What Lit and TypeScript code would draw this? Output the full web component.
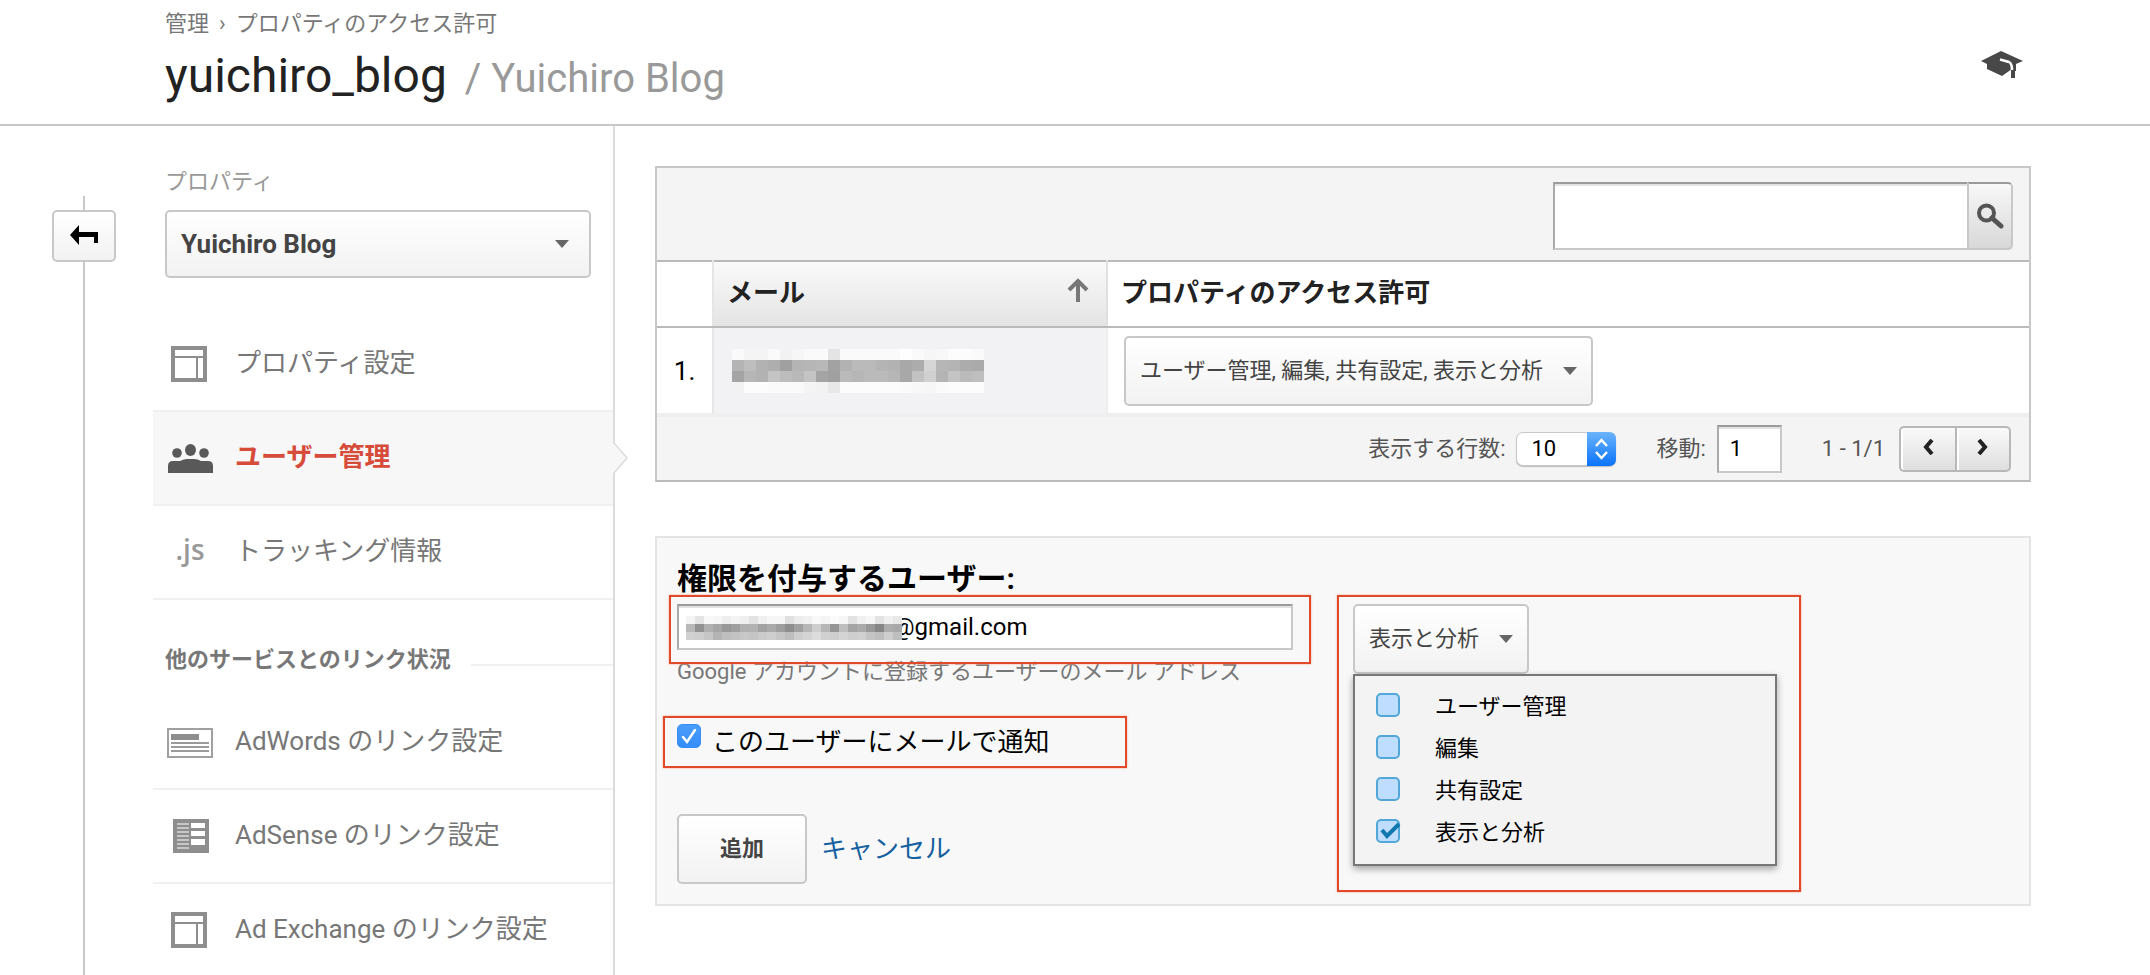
import { LitElement, html, css, svg } from "lit";
import { customElement, state } from "lit/decorators.js";

type NavItem = { label: string; icon: string; active?: boolean };

const PROPERTY_NAV: NavItem[] = [
  { label: "プロパティ設定", icon: "layout" },
  { label: "ユーザー管理", icon: "people", active: true },
  { label: "トラッキング情報", icon: "js" },
];

const LINK_NAV: NavItem[] = [
  { label: "AdWords のリンク設定", icon: "adwords" },
  { label: "AdSense のリンク設定", icon: "adsense" },
  { label: "Ad Exchange のリンク設定", icon: "layout" },
];

const PERMISSIONS = ["ユーザー管理", "編集", "共有設定", "表示と分析"];

/* Grey levels of the masked part of each address, one list per pixel row. */
const MASK_ROW = [
  [250, 244, 244, 250, 242, 246, 250, 250, 228, 250, 250, 250, 250, 250, 254, 250, 246, 248, 252, 252, 250],
  [180, 190, 178, 174, 160, 180, 182, 184, 162, 178, 186, 186, 180, 178, 168, 172, 214, 182, 180, 172, 170],
  [164, 182, 178, 196, 188, 184, 196, 164, 160, 186, 182, 186, 186, 182, 168, 194, 208, 180, 196, 186, 190],
  [242, 252, 252, 250, 250, 250, 244, 242, 232, 252, 252, 252, 252, 252, 250, 248, 246, 250, 252, 252, 252],
];
const MASK_EMAIL = [
  [244, 228, 248, 246, 238, 244, 238, 226, 240, 246, 246, 224, 236, 240, 248, 244, 250, 246, 226, 240, 246, 226, 240, 232],
  [184, 146, 176, 166, 152, 160, 176, 178, 162, 170, 158, 142, 160, 182, 206, 182, 150, 190, 164, 170, 152, 134, 172, 168],
  [208, 206, 198, 180, 190, 194, 200, 196, 202, 206, 198, 190, 206, 212, 220, 208, 206, 212, 206, 208, 196, 190, 206, 190],
];

const mosaic = (rows: number[][], cellW: number, cellH: number) => html`
  <svg width=${rows[0].length * cellW} height=${rows.length * cellH} shape-rendering="crispEdges" aria-hidden="true">
    ${rows.map((row, y) =>
      row.map((v, x) => svg`<rect x=${x * cellW} y=${y * cellH} width=${cellW} height=${cellH} fill=${`rgb(${v},${v},${v + 1})`} />`)
    )}
  </svg>`;

const ICONS: Record<string, unknown> = {
  layout: html`<svg width="48" height="40" viewBox="0 0 48 40">
    <path fill="#8e8e8e" fill-rule="evenodd" d="M5 3h36v36H5zM9 7v6h28V7zM9 15v20h21V15zM32 15v20h5V15z" />
  </svg>`,
  people: html`<svg width="48" height="40" viewBox="0 0 48 40" fill="#595959">
    <ellipse cx="24.500" cy="13" rx="5.500" ry="6" /><circle cx="11" cy="16" r="4.800" /><circle cx="38" cy="16" r="4.800" />
    <path d="M2 36v-7q0-5 5-5h7q4-2 7-2h7q4 0 7 2h7q5 0 5 5v7z" />
  </svg>`,
  js: html`<span class="js">.js</span>`,
  adwords: html`<svg width="48" height="40" viewBox="0 0 48 40">
    <rect x="2" y="8" width="44" height="28" fill="#fff" stroke="#a0a0a0" stroke-width="2" />
    <rect x="5" y="13" width="28" height="6" fill="#8e8e8e" />
    <path stroke="#9a9a9a" stroke-width="2" d="M5 22h38M5 26h38M5 30h38" />
  </svg>`,
  adsense: html`<svg width="48" height="40" viewBox="0 0 48 40">
    <rect x="7" y="4" width="36" height="34" fill="#8e8e8e" />
    <path stroke="#c6c6c6" stroke-width="2" d="M11 9h12M11 13h12M11 17h12M11 21h12M11 25h12M11 29h12M11 33h12" />
    <path fill="#fff" d="M25 8h14v5H25zM25 16h14v5H25zM25 24h14v6H25z" />
  </svg>`,
};

const caret = html`<svg class="caret" width="14" height="8" viewBox="0 0 14 8" aria-hidden="true">
  <path d="M0 0h14L7 8z" fill="#666" />
</svg>`;

@customElement("app-root")
export class AppRoot extends LitElement {
  @state() private granted = new Set<string>(["表示と分析"]);

  static styles = css`
    :host {
      display: flex;
      flex-direction: column;
      min-height: 100vh;
      background: #fff;
      color: #222;
      font-family: Roboto, "Noto Sans CJK JP", sans-serif;
      font-size: 22px;
      line-height: 32px;
    }
    *, *::before, *::after { box-sizing: border-box; }
    svg { display: block; flex: none; }
    a { color: inherit; text-decoration: none; }
    button, input, select { font: inherit; margin: 0; }
    h1, h2, ul, p, fieldset { margin: 0; padding: 0; border: 0; list-style: none; }

    .top {
      display: flex;
      justify-content: space-between;
      align-items: center;
      height: 126px;
      padding: 6px 127px 0 165px;
      border-bottom: 2px solid #c8c8c8;
    }
    .crumbs { display: flex; gap: 10px; color: #777; }
    .title { display: flex; align-items: baseline; gap: 18px; height: 82px; font-size: 48px; line-height: 72px; font-weight: 400; }
    .title .sub { font-size: 40px; color: #999; }

    .page { flex: 1; display: grid; grid-template-columns: 153px 462px minmax(0, 1fr); }
    .rail { display: flex; flex-direction: column; align-items: center; width: 64px; margin-left: 52px; padding-top: 70px; }
    .rail::before { content: ""; width: 2px; height: 14px; background: #c8c8c8; }
    .rail::after { content: ""; width: 2px; flex: 1; background: #c8c8c8; }

    .btn {
      display: inline-flex;
      align-items: center;
      justify-content: center;
      border: 2px solid #c8c8c8;
      border-radius: 5px;
      background: linear-gradient(#fff, #f2f2f2);
      color: #444;
      padding: 0;
    }
    .back { width: 64px; height: 52px; padding-bottom: 2px; }

    .side { border-right: 2px solid #dcdcdc; padding-top: 40px; }
    .caption { display: block; padding-left: 12px; color: #999; }
    .picker { display: grid; align-items: center; margin: 12px 22px 40px 12px; }
    .picker > * { grid-area: 1 / 1; }
    .picker select {
      appearance: none;
      height: 68px;
      padding: 0 50px 0 14px;
      border: 2px solid #c8c8c8;
      border-radius: 5px;
      background: linear-gradient(#fff, #f2f2f2);
      color: #444;
      font-size: 26px;
      font-weight: 700;
    }
    .picker .caret { justify-self: end; margin-right: 22px; pointer-events: none; }

    .item { position: relative; border-bottom: 2px solid #f0f0f0; }
    .item a { display: flex; align-items: center; gap: 21px; height: 92px; padding: 0 0 2px 13px; font-size: 26px; line-height: 38px; color: #777; }
    .item.active { background: #f7f7f7; }
    .item.active a { color: #d64b3a; font-weight: 700; }
    .links .item:last-child { border: 0; }
    .links .item:last-child a { height: 90px; padding-bottom: 0; }
    .tip { position: absolute; left: 100%; top: 31px; }
    .js { width: 48px; padding-bottom: 4px; text-align: center; color: #999; font: 600 28px/36px "Open Sans", sans-serif; }
    .group { display: flex; align-items: center; gap: 20px; height: 96px; padding: 24px 0 0 12px; font-size: 22px; font-weight: 700; line-height: 32px; color: #777; }
    .group::after { content: ""; flex: 1; height: 2px; margin-top: 10px; background: #f0f0f0; }

    .main { padding: 40px 119px 0 40px; }
    .card { border: 2px solid #c8c8c8; border-bottom-color: #bababa; }
    .tools { display: flex; justify-content: flex-end; align-items: center; height: 92px; padding: 3px 16px 0; background: #f4f4f4; }
    .box { border: 2px solid #c8c8c8; border-top: 2px solid #9b9b9b; border-left: 2px solid #aaa; background: #fff; color: #000; box-shadow: inset 0 2px #e2e2e2; }
    .search { display: flex; height: 68px; }
    .search .box { width: 414px; border-right: 0; }
    .search .btn { width: 46px; border-radius: 0 5px 5px 0; border-top-color: #9b9b9b; background: linear-gradient(#f8f8f8, #d8d8d8); }

    table { width: 100%; border-collapse: collapse; table-layout: fixed; }
    th { height: 66px; padding: 0 13px 2px; border: 0 solid #bababa; border-width: 2px 0; text-align: left; font-size: 26px; line-height: 38px; font-weight: 700; }
    td { height: 86px; padding: 0 16px; }
    .num { width: 56px; padding: 0; text-align: center; color: #000; font-size: 26px; border-right: 2px solid #e6e6e6; }
    .mail { width: 394px; border-right: 2px solid #e0e0e0; }
    th.mail { background: linear-gradient(#fafafa, #e4e4e4); }
    td.mail { background: #f2f2f5; border-right-color: #eee; padding: 0 18px; }
    .sort { display: flex; justify-content: space-between; align-items: center; padding-right: 4px; }
    .sort svg { margin-bottom: 6px; }
    .perm { height: 70px; padding: 0 14px; gap: 20px; }

    .foot { display: flex; justify-content: flex-end; align-items: center; height: 67px; padding: 0 18px 0 20px; border-top: 4px solid #eee; background: #f4f4f4; color: #555; }
    .foot label { display: flex; align-items: center; gap: 11px; }
    .rows { display: grid; align-items: center; margin-right: 40px; }
    .rows > * { grid-area: 1 / 1; }
    .rows select { appearance: none; width: 100px; height: 34px; padding: 0 14px; border: 1px solid #c8c8c8; border-radius: 7px; background: #fff; color: #000; box-shadow: 0 1px 1px #bbb; line-height: 32px; }
    .rows .step { justify-self: end; pointer-events: none; }
    .goto { width: 65px; height: 48px; padding: 0 11px; }
    .range { margin: 0 14px 0 40px; }
    .pager { display: flex; }
    .pager .btn { width: 56px; height: 46px; border-color: #b8b8b8; background: linear-gradient(#fafafa, #dedede); padding-bottom: 3px; box-shadow: inset 2px 0 #fff; }
    .pager .btn:first-child { border-radius: 5px 0 0 5px; border-right: 0; }
    .pager .btn:last-child { border-radius: 0 5px 5px 0; }

    .form { display: grid; grid-template-columns: minmax(0, 616px) minmax(0, 424px); column-gap: 60px; margin-top: 54px; padding: 22px 20px 20px; border: 2px solid #e4e4e4; background: #f8f8f8; }
    .form h2 { grid-column: 1 / -1; margin-bottom: 6px; font-size: 30px; line-height: 38px; font-weight: 700; color: #000; }
    .email { position: relative; }
    .email input { display: block; width: 100%; height: 46px; padding: 0 10px 0 214px; font-size: 24px; }
    .email .mask { position: absolute; left: 9px; top: 12px; }
    .help { margin-top: 6px; color: #777; }
    .notify { position: relative; display: flex; align-items: center; height: 52px; margin-top: 28px; color: #000; font-size: 26px; }
    .tick { display: grid; margin-right: 11px; }
    .tick > * { grid-area: 1 / 1; pointer-events: none; }
    .tick svg { overflow: visible; }
    .tick input { appearance: none; pointer-events: auto; width: 24px; height: 24px; border-radius: 5px; }
    .notify .tick { margin-bottom: 12px; }
    .notify .tick input { border: 1px solid #3a8cf2; background: linear-gradient(#4a9dfa, #348dfa); }
    .actions { display: flex; align-items: center; gap: 14px; margin-top: 46px; }
    .add { width: 130px; height: 70px; font-weight: 700; }
    .cancel { color: #15609e; font-size: 26px; }

    .grant { position: relative; }
    .grant .perm { width: 176px; }
    .menu { position: absolute; top: 70px; left: 0; width: 100%; height: 192px; padding: 10px 21px; border: 2px solid #777; background: #f3f3f3; box-shadow: 0 3px 7px rgba(0, 0, 0, 0.35); }
    .menu label { display: flex; align-items: center; height: 42px; color: #000; }
    .menu .tick { margin: 0 35px 4px 0; }
    .menu .tick input { border: 2px solid #50a7d8; background: #bfddff; }
    .mark { position: absolute; border: 2px solid #e0492a; box-shadow: 0 0 2px #f9a88c; pointer-events: none; }
    .mark.a { inset: -9px -18px -14px -8px; }
    .mark.b { top: 0; bottom: 0; left: -14px; width: 464px; }
    .mark.c { top: -9px; left: -16px; right: -24px; height: 297px; }
  `;

  private toggle(name: string) {
    const next = new Set(this.granted);
    next.has(name) ? next.delete(name) : next.add(name);
    this.granted = next;
  }

  private navItem(item: NavItem) {
    return html`<li class="item ${item.active ? "active" : ""}">
      <a href="#">${ICONS[item.icon]}<span>${item.label}</span></a>
      ${item.active
        ? html`<svg class="tip" width="16" height="30" viewBox="0 0 16 30" aria-hidden="true">
            <path d="M0 0L14 15L0 30z" fill="#f7f7f7" /><path d="M1 0L14 15L1 30" fill="none" stroke="#dcdcdc" stroke-width="1.500" />
          </svg>`
        : ""}
    </li>`;
  }

  render() {
    return html`
      <header class="top">
        <div>
          <nav class="crumbs" aria-label="パンくず">
            <a href="#">管理</a><span>›</span><a href="#">プロパティのアクセス許可</a>
          </nav>
          <h1 class="title"><span>yuichiro_blog</span><span class="sub">/ Yuichiro Blog</span></h1>
        </div>
        <svg width="42" height="28" viewBox="0 0 42 28" role="img" aria-label="ヘルプ">
          <path fill="#484848" d="M0 10L20 0L42 10L35 13V20H31V18L21 25L6 18V13z" />
          <path fill="none" stroke="#fff" stroke-width="2.500" d="M19 8.500L28 11Q31 12.500 31 19" />
          <path fill="#484848" d="M30 19h4v8h-4z" />
        </svg>
      </header>

      <div class="page">
        <div class="rail">
          <button class="btn back" aria-label="戻る">
            <svg width="28" height="20" viewBox="0 0 28 20"><path d="M0 10L9 0V7H28V18H24V12H9V20z" fill="#000" /></svg>
          </button>
        </div>

        <aside class="side">
          <label class="caption" for="property">プロパティ</label>
          <div class="picker">
            <select id="property"><option>Yuichiro Blog</option></select>
            ${caret}
          </div>
          <ul>${PROPERTY_NAV.map((i) => this.navItem(i))}</ul>
          <h2 class="group">他のサービスとのリンク状況</h2>
          <ul class="links">${LINK_NAV.map((i) => this.navItem(i))}</ul>
        </aside>

        <main class="main">
          <section class="card">
            <div class="tools">
              <form class="search" @submit=${(e: Event) => e.preventDefault()}>
                <input class="box" type="text" aria-label="検索" />
                <button class="btn" aria-label="検索">
                  <svg width="28" height="26" viewBox="0 0 28 26">
                    <circle cx="10.500" cy="10" r="7.500" fill="none" stroke="#555" stroke-width="4" />
                    <path d="M16 15L25 23" stroke="#555" stroke-width="5" stroke-linecap="round" />
                  </svg>
                </button>
              </form>
            </div>
            <table>
              <thead>
                <tr>
                  <th class="num"></th>
                  <th class="mail">
                    <div class="sort">メール
                      <svg width="22" height="24" viewBox="0 0 22 24" aria-hidden="true">
                        <path d="M11 24V4M2 12L11 3L20 12" fill="none" stroke="#777" stroke-width="4" />
                      </svg>
                    </div>
                  </th>
                  <th>プロパティのアクセス許可</th>
                </tr>
              </thead>
              <tbody>
                <tr>
                  <td class="num">1.</td>
                  <td class="mail">${mosaic(MASK_ROW, 12, 11)}</td>
                  <td><button class="btn perm" aria-haspopup="true">${PERMISSIONS.join(", ")}${caret}</button></td>
                </tr>
              </tbody>
            </table>
            <div class="foot">
              <label>表示する行数:
                <span class="rows">
                  <select><option>10</option></select>
                  <svg class="step" width="29" height="34" viewBox="0 0 29 34" aria-hidden="true">
                    <defs><linearGradient id="blue" x2="0" y2="1"><stop stop-color="#6bb4fb" /><stop offset="1" stop-color="#0a72fb" /></linearGradient></defs>
                    <path d="M0 0H22Q29 0 29 7V27Q29 34 22 34H0z" fill="url(#blue)" />
                    <path d="M9 14L14.500 8L20 14M9 20L14.500 26L20 20" fill="none" stroke="#fff" stroke-width="2.500" />
                  </svg>
                </span>
              </label>
              <label>移動: <input class="box goto" type="text" value="1" /></label>
              <span class="range">1 - 1/1</span>
              <div class="pager">
                <button class="btn" aria-label="前へ"><svg width="12" height="16" viewBox="0 0 12 16"><path d="M10 1L4 8L10 15" fill="none" stroke="#222" stroke-width="4" /></svg></button>
                <button class="btn" aria-label="次へ"><svg width="12" height="16" viewBox="0 0 12 16"><path d="M2 1L8 8L2 15" fill="none" stroke="#222" stroke-width="4" /></svg></button>
              </div>
            </div>
          </section>

          <form class="form" @submit=${(e: Event) => e.preventDefault()}>
            <h2><label for="email">権限を付与するユーザー:</label></h2>
            <div>
              <div class="email">
                <input id="email" class="box" type="text" value="@gmail.com" />
                <span class="mask">${mosaic(MASK_EMAIL, 9, 8)}</span>
                <span class="mark a"></span>
              </div>
              <p class="help">Google アカウントに登録するユーザーのメール アドレス</p>
              <label class="notify">
                <span class="tick">
                  <input type="checkbox" checked />
                  <svg width="24" height="24" viewBox="0 0 24 24"><path d="M6 13L10 18L18 6" fill="none" stroke="#fff" stroke-width="2.500" stroke-linecap="round" /></svg>
                </span>
                このユーザーにメールで通知
                <span class="mark b"></span>
              </label>
              <div class="actions">
                <button class="btn add">追加</button>
                <a class="cancel" href="#">キャンセル</a>
              </div>
            </div>
            <div class="grant">
              <button class="btn perm" type="button" aria-haspopup="true" aria-expanded="true">表示と分析${caret}</button>
              <fieldset class="menu">
                ${PERMISSIONS.map(
                  (p) => html`<label>
                    <span class="tick">
                      <input type="checkbox" .checked=${this.granted.has(p)} @change=${() => this.toggle(p)} />
                      ${this.granted.has(p)
                        ? html`<svg width="24" height="24" viewBox="0 0 24 24"><path d="M6 11L11 17L23 5" fill="none" stroke="#0f78ac" stroke-width="4" /></svg>`
                        : ""}
                    </span>${p}</label>`
                )}
              </fieldset>
              <span class="mark c"></span>
            </div>
          </form>
        </main>
      </div>
    `;
  }
}
